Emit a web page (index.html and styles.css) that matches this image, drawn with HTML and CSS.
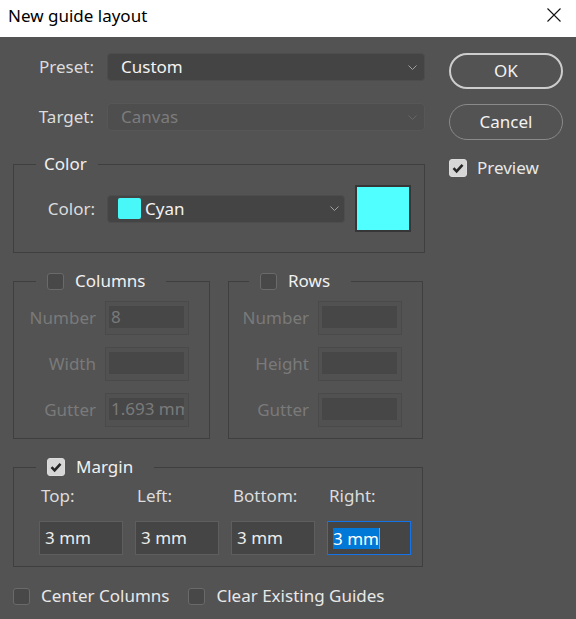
FILE: index.html
```html
<!DOCTYPE html>
<html lang="en">
<head>
<meta charset="utf-8">
<title>New guide layout</title>
<link rel="stylesheet" href="styles.css">
</head>
<body>
<div class="titlebar">
  <span class="title">New guide layout</span>
  <svg class="close" width="14" height="14" viewBox="0 0 14 14"><path d="M0.5 0.5 L13.5 13.5 M13.5 0.5 L0.5 13.5" stroke="#111" stroke-width="1.1" fill="none"/></svg>
</div>
<div class="dialog">
  <div class="left">
    <div class="row">
      <span class="lbl">Preset:</span>
      <div class="select select-wide">
        <span class="value">Custom</span>
        <svg class="chev" width="9" height="5" viewBox="0 0 9 5"><path d="M0.5 0.5 L4.5 4.5 L8.5 0.5" stroke="#a0a0a0" fill="none"/></svg>
      </div>
    </div>
    <div class="row row-target">
      <span class="lbl">Target:</span>
      <div class="select select-wide is-disabled">
        <span class="value">Canvas</span>
        <svg class="chev" width="9" height="5" viewBox="0 0 9 5"><path d="M0.5 0.5 L4.5 4.5 L8.5 0.5" stroke="#666" fill="none"/></svg>
      </div>
    </div>

    <fieldset class="group group-color">
      <legend class="legend legend-plain">Color</legend>
      <div class="color-row">
        <span class="lbl lbl-color">Color:</span>
        <div class="select select-color">
          <span class="mini-swatch"></span>
          <span class="value">Cyan</span>
          <svg class="chev" width="9" height="5" viewBox="0 0 9 5"><path d="M0.5 0.5 L4.5 4.5 L8.5 0.5" stroke="#a0a0a0" fill="none"/></svg>
        </div>
        <div class="big-swatch"></div>
      </div>
    </fieldset>

    <div class="pair">
      <fieldset class="group group-grid">
        <legend class="legend"><span class="cb"></span><span class="legend-text">Columns</span></legend>
        <div class="fields">
          <span class="flbl">Number</span><div class="dfield"><div class="dinner">8</div></div>
          <span class="flbl">Width</span><div class="dfield"><div class="dinner"></div></div>
          <span class="flbl">Gutter</span><div class="dfield"><div class="dinner">1.693 mm</div></div>
        </div>
      </fieldset>
      <fieldset class="group group-grid">
        <legend class="legend legend-rows"><span class="cb"></span><span class="legend-text">Rows</span></legend>
        <div class="fields">
          <span class="flbl">Number</span><div class="dfield"><div class="dinner"></div></div>
          <span class="flbl">Height</span><div class="dfield"><div class="dinner"></div></div>
          <span class="flbl">Gutter</span><div class="dfield"><div class="dinner"></div></div>
        </div>
      </fieldset>
    </div>

    <fieldset class="group group-margin">
      <legend class="legend"><span class="cb cb-on"><svg width="18" height="18" viewBox="0 0 18 18"><path d="M4.5 9.2 L7.6 12.3 L13.5 5.8" stroke="#262626" stroke-width="2.6" fill="none"/></svg></span><span class="legend-text">Margin</span></legend>
      <div class="margins">
        <span class="mlbl">Top:</span>
        <span class="mlbl">Left:</span>
        <span class="mlbl">Bottom:</span>
        <span class="mlbl">Right:</span>
        <div class="inp">3 mm</div>
        <div class="inp">3 mm</div>
        <div class="inp">3 mm</div>
        <div class="inp inp-focus"><span class="sel">3 mm</span></div>
      </div>
    </fieldset>

    <div class="bottom-checks">
      <span class="check"><span class="cb"></span><span class="check-text">Center Columns</span></span>
      <span class="check"><span class="cb"></span><span class="check-text">Clear Existing Guides</span></span>
    </div>
  </div>

  <div class="right">
    <div class="btn btn-ok">OK</div>
    <div class="btn btn-cancel">Cancel</div>
    <div class="check check-preview"><span class="cb cb-on"><svg width="18" height="18" viewBox="0 0 18 18"><path d="M4.5 9.2 L7.6 12.3 L13.5 5.8" stroke="#262626" stroke-width="2.6" fill="none"/></svg></span><span class="check-text">Preview</span></div>
  </div>
</div>
</body>
</html>
```
FILE: styles.css
```css
* { box-sizing: border-box; }
html, body { margin: 0; padding: 0; }
body {
  width: 576px;
  height: 619px;
  background: #535353;
  font-family: "Noto Sans", "Open Sans", sans-serif;
  font-size: 17px;
  line-height: 22px;
  color: #e4e4e4;
  overflow: hidden;
}

.titlebar {
  height: 37px;
  background: #ffffff;
  display: flex;
  justify-content: space-between;
  align-items: flex-start;
  padding: 5px 0 0 8px;
}
.title { color: #000; }
.close { margin: 3px 15px 0 0; }

.dialog {
  display: flex;
  padding: 16px 0 0 13px;
}
.left { width: 412px; }
.right {
  width: 114px;
  margin-left: 24px;
  display: flex;
  flex-direction: column;
}

.row {
  display: flex;
  align-items: center;
  height: 28px;
}
.row-target { margin-top: 22px; }
.lbl {
  width: 81px;
  text-align: right;
  margin-right: 13px;
  color: #dcdcdc;
}
.lbl-color { width: 81px; margin-right: 12px; }

.select {
  height: 28px;
  background: #444444;
  border: 1px solid #4d4d4d;
  border-radius: 4px;
  display: flex;
  align-items: center;
  color: #f2f2f2;
}
.select-wide { width: 318px; padding: 0 7px 0 13px; }
.select .value { flex: 1; }
.select.is-disabled {
  background: #4e4e4e;
  border-color: #575757;
  color: #7c7c7c;
}
.chev { flex: none; }

.group {
  margin: 0;
  padding: 0;
  border: 1px solid #3f3f3f;
  min-width: 0;
}
.legend {
  margin-left: 22px;
  padding: 0 21px 0 11px;
  height: 22px;
  display: flex;
  align-items: center;
  color: #f0f0f0;
}
.legend-plain { padding: 0 11px 0 8px; }
.legend-rows { margin-left: 20px; }
.legend-text { margin-left: 11px; }

.group-color {
  margin-top: 22px;
  width: 412px;
  padding: 10px 13px 20px 0;
}
.color-row {
  display: flex;
  align-items: center;
}
.select-color {
  width: 238px;
  padding: 0 5px 0 10px;
}
.mini-swatch {
  width: 23px;
  height: 21px;
  background: #48f8f8;
  border-radius: 2px;
  margin-right: 4px;
}
.big-swatch {
  width: 56px;
  height: 47px;
  margin-left: 10px;
  background: #50ffff;
  border: 2px solid #363636;
}

.pair {
  margin-top: 17px;
  display: grid;
  grid-template-columns: 197px 195px;
  column-gap: 18px;
}
.group-grid { padding: 9px 20px 11px 0; }
.fields {
  display: grid;
  grid-template-columns: 1fr 84px;
  column-gap: 9px;
  row-gap: 12px;
  align-items: center;
}
.flbl {
  text-align: right;
  color: #7a7a7a;
}
.dfield {
  height: 34px;
  border: 1px solid #4a4a4a;
  background: #515151;
  padding: 4px 4px 6px 3px;
}
.dinner {
  height: 100%;
  background: #474747;
  color: #7a7a7a;
  padding-left: 2px;
  white-space: nowrap;
  overflow: hidden;
}

.cb {
  width: 17px;
  height: 17px;
  flex: none;
  background: #484848;
  border: 1px solid #6a6a6a;
  border-radius: 3px;
  display: inline-block;
}
.cb-on {
  width: 18px;
  height: 18px;
  background: #d6d6d6;
  border-color: #dcdcdc;
  position: relative;
}
.cb-on svg { position: absolute; left: -1px; top: -1px; }

.group-margin {
  margin-top: 17px;
  width: 410px;
  padding: 7px 0 11px 0;
}
.margins {
  margin-left: 25px;
  display: grid;
  grid-template-columns: repeat(4, 84px);
  column-gap: 12px;
  row-gap: 14px;
}
.mlbl { padding-left: 2px; color: #dcdcdc; }
.inp {
  height: 34px;
  border: 1px solid #5e5e5e;
  background: #454545;
  padding: 0 5px;
  display: flex;
  align-items: center;
  color: #ececec;
}
.inp-focus { border-color: #1473e6; }
.sel {
  background: #0078d7;
  color: #ffffff;
  line-height: 21px;
  border-right: 1px solid #e8882c;
}

.bottom-checks {
  margin-top: 18px;
  display: flex;
  gap: 19px;
}
.check {
  display: flex;
  align-items: center;
  height: 22px;
}
.check-text { margin-left: 11px; color: #e8e8e8; }

.btn {
  height: 36px;
  border-radius: 18px;
  display: flex;
  align-items: center;
  justify-content: center;
  color: #f2f2f2;
}
.btn-ok { border: 2px solid #cdcdcd; }
.btn-cancel { margin-top: 15px; border: 1px solid #8a8a8a; }
.check-preview { margin-top: 17px; }
.check-preview .check-text { margin-left: 10px; }
```
